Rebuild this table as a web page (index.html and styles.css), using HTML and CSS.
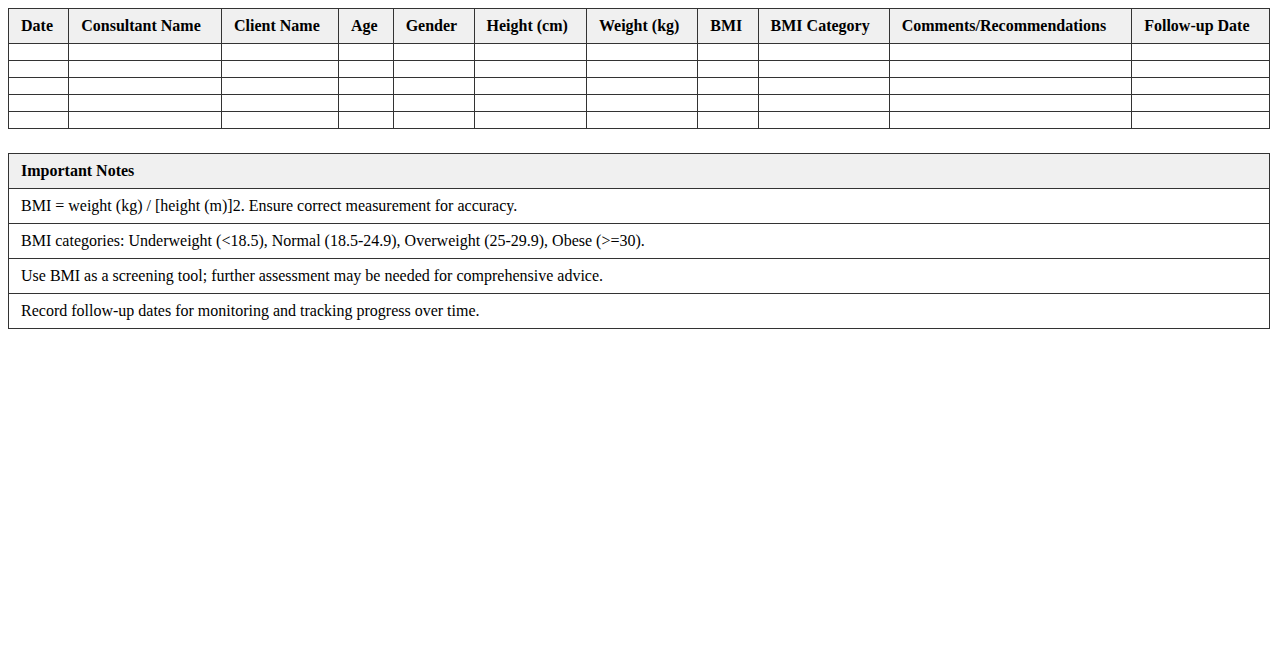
FILE: index.html
```html
<!DOCTYPE html>
<html>
<head>
<meta charset="utf-8">
<link rel="stylesheet" href="styles.css">
</head>
<body>
<table class="grid">
  <thead>
    <tr>
      <th>Date</th><th>Consultant Name</th><th>Client Name</th><th>Age</th><th>Gender</th><th>Height (cm)</th><th>Weight (kg)</th><th>BMI</th><th>BMI Category</th><th>Comments/Recommendations</th><th>Follow-up Date</th>
    </tr>
  </thead>
  <tbody>
    <tr><td></td><td></td><td></td><td></td><td></td><td></td><td></td><td></td><td></td><td></td><td></td></tr>
    <tr><td></td><td></td><td></td><td></td><td></td><td></td><td></td><td></td><td></td><td></td><td></td></tr>
    <tr><td></td><td></td><td></td><td></td><td></td><td></td><td></td><td></td><td></td><td></td><td></td></tr>
    <tr><td></td><td></td><td></td><td></td><td></td><td></td><td></td><td></td><td></td><td></td><td></td></tr>
    <tr><td></td><td></td><td></td><td></td><td></td><td></td><td></td><td></td><td></td><td></td><td></td></tr>
  </tbody>
</table>
<table class="grid notes">
  <thead>
    <tr><th>Important Notes</th></tr>
  </thead>
  <tbody>
    <tr><td>BMI = weight (kg) / [height (m)]2. Ensure correct measurement for accuracy.</td></tr>
    <tr><td>BMI categories: Underweight (&lt;18.5), Normal (18.5-24.9), Overweight (25-29.9), Obese (&gt;=30).</td></tr>
    <tr><td>Use BMI as a screening tool; further assessment may be needed for comprehensive advice.</td></tr>
    <tr><td>Record follow-up dates for monitoring and tracking progress over time.</td></tr>
  </tbody>
</table>
</body>
</html>
```
FILE: styles.css
```css
body {
  margin: 8px;
  font-family: "Liberation Serif", "Times New Roman", serif;
  font-size: 16px;
  color: #000;
  background: #fff;
}
.grid {
  width: 100%;
  border-collapse: collapse;
  margin-bottom: 24px;
}
.grid th,
.grid td {
  border: 1px solid #333;
  padding: 8px 12px;
  text-align: left;
}
.grid th {
  background: #f0f0f0;
  font-weight: bold;
}
```
